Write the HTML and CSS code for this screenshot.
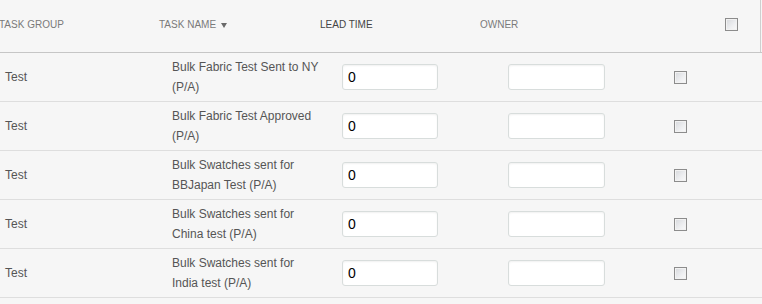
FILE: index.html
```html
<!DOCTYPE html>
<html>
<head>
<meta charset="utf-8">
<link rel="stylesheet" href="styles.css">
</head>
<body>
<div class="grid">
  <div class="head">
    <div class="hcell">TASK GROUP</div>
    <div class="hcell">TASK NAME <span class="sort"></span></div>
    <div class="hcell dark">LEAD TIME</div>
    <div class="hcell">OWNER</div>
    <div class="hcell"><input type="checkbox" class="cb"></div>
  </div>
  <div class="row">
    <div class="group">Test</div>
    <div class="name">Bulk Fabric Test Sent to NY (P/A)</div>
    <div><input class="field" type="text" value="0"></div>
    <div><input class="field" type="text" value=""></div>
    <div><input type="checkbox" class="cb"></div>
  </div>
  <div class="row">
    <div class="group">Test</div>
    <div class="name">Bulk Fabric Test Approved (P/A)</div>
    <div><input class="field" type="text" value="0"></div>
    <div><input class="field" type="text" value=""></div>
    <div><input type="checkbox" class="cb"></div>
  </div>
  <div class="row">
    <div class="group">Test</div>
    <div class="name">Bulk Swatches sent for BBJapan Test (P/A)</div>
    <div><input class="field" type="text" value="0"></div>
    <div><input class="field" type="text" value=""></div>
    <div><input type="checkbox" class="cb"></div>
  </div>
  <div class="row">
    <div class="group">Test</div>
    <div class="name">Bulk Swatches sent for China test (P/A)</div>
    <div><input class="field" type="text" value="0"></div>
    <div><input class="field" type="text" value=""></div>
    <div><input type="checkbox" class="cb"></div>
  </div>
  <div class="row">
    <div class="group">Test</div>
    <div class="name">Bulk Swatches sent for India test (P/A)</div>
    <div><input class="field" type="text" value="0"></div>
    <div><input class="field" type="text" value=""></div>
    <div><input type="checkbox" class="cb"></div>
  </div>
</div>
</body>
</html>
```
FILE: styles.css
```css
html, body {
  margin: 0;
  padding: 0;
  background: #f6f6f6;
  font-family: "Liberation Sans", Arial, sans-serif;
  overflow: hidden;
}
.grid {
  width: 762px;
}
.head {
  display: grid;
  grid-template-columns: 160px 161px 160px 245px 13px;
  grid-auto-rows: 13px;
  align-content: start;
  box-sizing: border-box;
  height: 53px;
  padding-top: 18px;
  margin-left: -1px;
  width: 763px;
  border-bottom: 1px solid #c6c6c6;
  position: relative;
}
.head::after {
  content: "";
  position: absolute;
  left: 761px;
  top: 0;
  width: 1px;
  height: 52px;
  background: #cfcfcf;
}
.hcell {
  font-size: 10px;
  line-height: 12px;
  height: 13px;
  color: #7a7a7a;
  white-space: nowrap;
  display: flex;
  align-items: center;
}
.hcell.dark {
  color: #444;
}
.sort {
  display: inline-block;
  width: 0;
  height: 0;
  margin-left: 5px;
  margin-top: 2px;
  border-left: 3.5px solid transparent;
  border-right: 3.5px solid transparent;
  border-top: 5px solid #6a6a6a;
}
.row {
  display: grid;
  grid-template-columns: 167px 170px 166px 166px 20px;
  align-items: center;
  padding-left: 5px;
  height: 49px;
  box-sizing: border-box;
  border-bottom: 1px solid #dedede;
  font-size: 12px;
  color: #555;
}
.group {
  line-height: 20px;
}
.name {
  width: 150px;
  line-height: 20px;
}
.field {
  display: block;
  width: 96px;
  height: 26px;
  box-sizing: border-box;
  margin: 0;
  padding: 0 5px;
  border: 1px solid #d8dddc;
  border-radius: 3px;
  background: #fff;
  box-shadow: inset 0 1px 2px rgba(0,0,0,0.06);
  font-family: "Liberation Sans", Arial, sans-serif;
  font-size: 14px;
  color: #000;
  outline: none;
}
.row > div:nth-child(4) .field {
  width: 97px;
}
.cb {
  -webkit-appearance: none;
  appearance: none;
  display: block;
  margin: 0;
  width: 13px;
  height: 13px;
  box-sizing: border-box;
  border: 1px solid #8c8c8c;
  background: linear-gradient(135deg, #d6d8dc 0%, #eeeff1 60%, #fafafa 100%);
  box-shadow: inset 0 0 0 1px #f2f2f2;
}
```
